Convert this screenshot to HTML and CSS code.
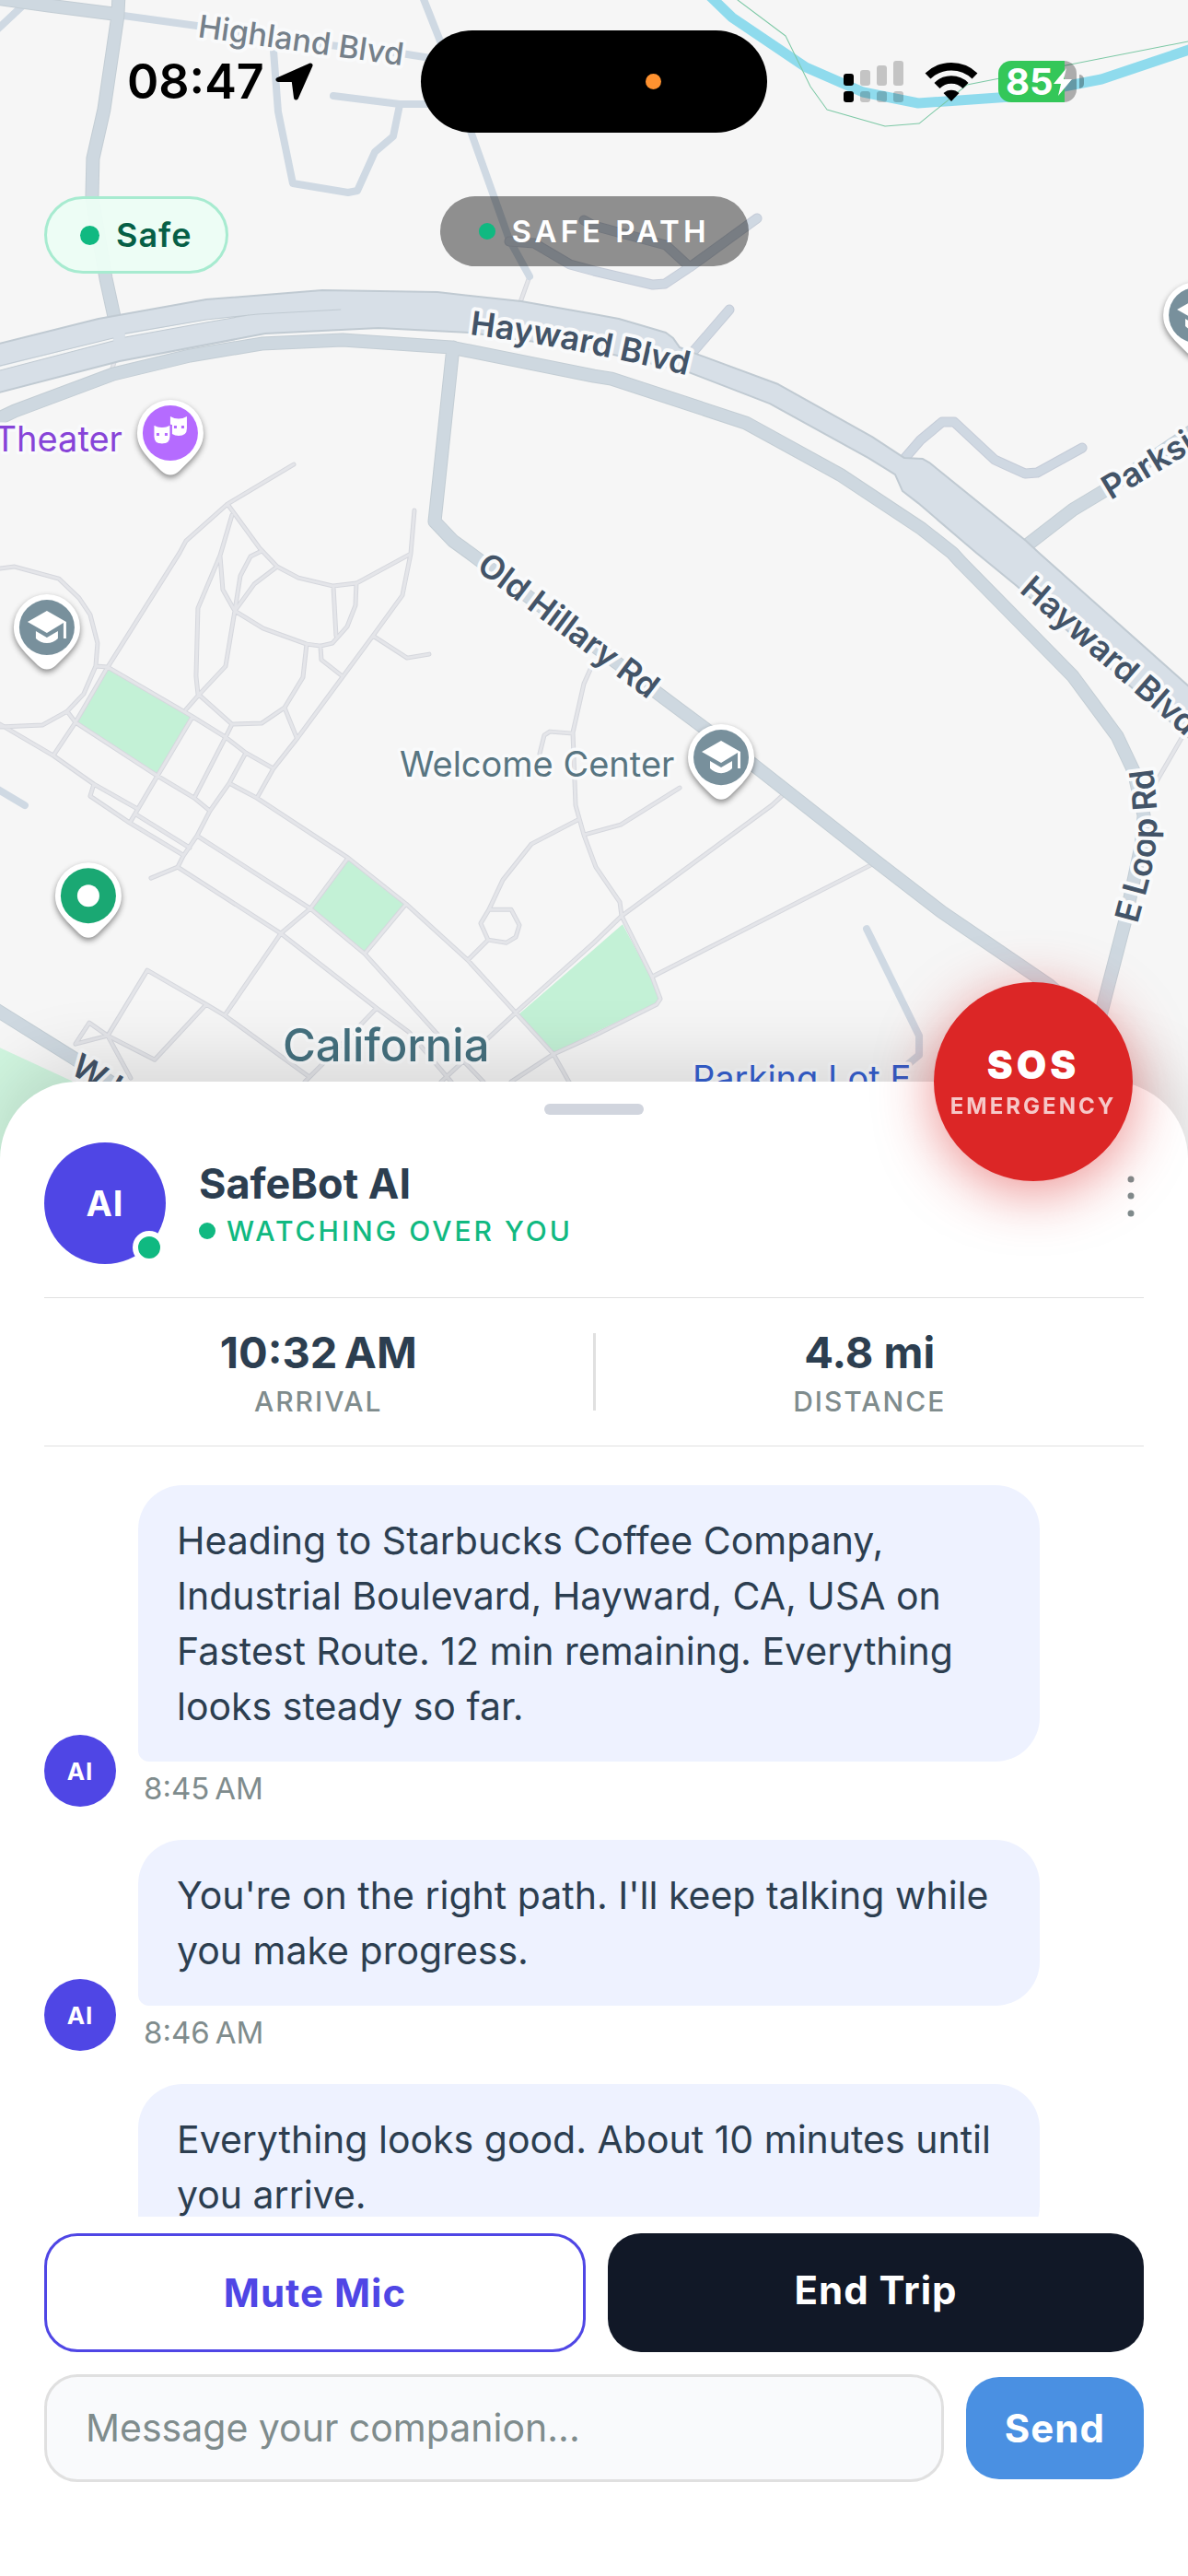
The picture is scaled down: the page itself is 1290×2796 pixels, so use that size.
FILE: index.html
```html
<!DOCTYPE html>
<html lang="en">
<head>
    <meta charset="UTF-8">
    <meta name="viewport" content="width=device-width, initial-scale=1.0">
    <title>Safe Path</title>
    <link rel="stylesheet" href="styles.css">
</head>
<body>
    <div class="screen">
        <section class="map">
            <svg class="map-canvas" viewBox="0 0 1290 1258" preserveAspectRatio="xMidYMin slice" role="img" aria-label="Map">
                <defs>
                    <path id="pin" d="M0-36A36 36 0 0 1 36 0C36 13 29 21 23 28L10 41Q0 50-10 41L-23 28C-29 21-36 13-36 0A36 36 0 0 1 0-36Z"/>
                    <g id="schoolPin">
                        <use href="#pin" class="pin-shape"/>
                        <circle r="30" fill="#78909c"/>
                        <path fill="#fff" d="M0-18 21-6V12H18V-5L0 6-21-6Z"/>
                        <path fill="#fff" d="M-12 4 0 11 12 4V12Q7 17 0 17T-12 12Z"/>
                    </g>
                    <path id="haywardLine" d="M510 363Q640 379 780 416"/>
                    <path id="loopLine" d="M1235 1003C1248 950 1268 915 1247 810"/>
                    <path id="walkways" d="M319 504 247 547 202 587 195 600 117 724M247 547 282 595 301 615 324 627 362 636 387 633 446 601 450 554M252 559 239 603 242 640 255 663 245 723 216 754 202 770M239 603 215 660 213 734 215 753 252 786 284 785 309 768 329 735 333 699M255 663 286 682 333 699 348 701 361 698 377 680 386 657 387 633M362 636 365 690M255 663 261 625 272 604 284 598M255 663 276 634 301 615M446 601 437 646 405 690 323 801 297 834 279 866M405 690 442 714 466 710M348 701 349 716 372 734M309 768 322 800M0 617 16 615 64 628 86 649 98 667 106 698 104 723 91 753 73 772 46 787 0 789M104 723 117 724 208 777 245 800 267 817 297 834M117 724 82 784 58 820M73 772 82 784 171 842 211 866 228 880M209 778 171 842 141 893M252 786 245 800 211 866M267 817 249 850 228 880 214 907 199 929 193 941 164 953M249 850 279 866 378 931 441 981 508 1042 560 1099 601 1144 619 1176M0 786 58 820 102 851 148 877M148 884 206 920M102 851 98 864 141 893 199 928M214 907 337 986 396 1035 473 1120 525 1174M193 941 305 1013 409 1094 444 1120 490 1174M378 931 337 986 305 1013 244 1102M441 981 396 1035M335 1168 244 1102 224 1090 160 1053 117 1124 168 1150 224 1090M331 1174 350 1155 409 1094M117 1124 82 1133 97 1110 117 1124 142 1170M479 1174 560 1099 645 1023 675 994 838 874 850 863M555 1174 601 1144 645 1124 713 1090 717 1084 708 1060 675 994 673 979 647 941 634 906 625 874 622 795 634 742 643 722M627 890 577 916 546 955 531 987 522 1002 530 1020 550 1023 560 1017 564 1004 555 987H531M530 1020 508 1042M622 796 597 794 591 798 586 818M634 906 674 895 738 855M708 1060 949 937M575 300 565 328M1283 801 1254 851M131 370 122 400"/>
                    <path id="lanes" d="M634 239 645 245 723 266 749 290M553 262 580 264 619 287 645 294 709 309 722 308 749 290 822 237M754 380 792 336M980 500 999 478 1023 458H1036L1080 499 1113 514 1126 513 1175 486"/>
                    <path id="roads" d="M-5-2 53 6 123 15M129-5 128 17 113 119 101 172 100 214 115 302 125 348 131 370M-5 456 16 446 123 406 206 386 284 373 372 369 490 377 645 408 664 411 810 459 912 515 1001 574 1034 600 1044 611 1165 734 1213 799 1231 837 1242 885 1239 918 1221 1002 1196 1098 1180 1160M492 377 472 566 492 587 510 600 707 747 818 830 949 933 1023 990 1139 1069 1180 1105M1112 594 1165 553 1200 532 1300 464M-10 1092 78 1147 160 1200"/>
                </defs>

                <!-- parks -->
                <g class="park">
                    <path d="M117 726 209 778 172 840 82 784Z"/>
                    <path d="M379 933 441 981 396 1034 339 986Z"/>
                    <path d="M563 1101 645 1030 676 1003 707 1061 716 1084 713 1088 645 1121 601 1143Z"/>
                    <path class="park-light" d="M0 1137 78 1173 160 1258H0Z"/>
                </g>

                <!-- walkways: darker edge first, then the fill on top -->
                <use href="#walkways" class="line walk-edge"/>
                <use href="#walkways" class="line walk-fill"/>

                <!-- water and creek trail -->
                <path class="line river" d="M765-10 795 19 875 73 937 100 997 112 1098 105 1196 86 1300 51"/>
                <path class="line trail" d="M801 0 853 39 880 94 898 119 961 137 998 134 1050 92 1290 45"/>

                <!-- side streets -->
                <g class="line street">
                    <path d="M-5 34 27 4M134 17 214 28 358 49 436 58 480 65M297 54 302 121 318 199 378 209 388 207 407 165 427 148 434 114M362 104 434 113H480M458-6 477 42 512 145 553 260 575 300"/>
                    <path d="M-10 852 27 874M-4 566V590M941 1008 998 1124V1145L986 1155"/>
                </g>
                <use href="#lanes" class="line lane-edge"/>
                <use href="#lanes" class="line lane-fill"/>

                <!-- main roads -->
                <use href="#roads" class="line road-edge"/>
                <use href="#roads" class="line road-fill"/>
                <path class="boulevard" d="M-5 374 107 346 224 325 350 315 475 317 566 327 645 341 672 346 723 361 731 367 738 377 756 384 845 417 947 474 982 497 1002 498 1009 502 1114 587 1128 600 1300 753V809L1104 636 1060 600 997 546 980 533 972 515 943 497 836 438 748 404 645 380 510 361 411 356 288 362 130 392-5 427Z"/>
                <path fill="#f5f6f6" d="M0 398 123 367V370L0 402ZM136 363 224 347 265 343 224 350 136 366Z"/>
                <path class="line median" d="M0 397 123 367M0 402 123 370M136 362 224 347 280 341 370 336M136 366 224 350 270 342"/>

                <!-- place and street names -->
                <g class="street-name">
                    <text class="faded" transform="translate(214 40) rotate(8)">Highland Blvd</text>
                    <text><textPath href="#haywardLine">Hayward Blvd</textPath></text>
                    <text transform="translate(1106 642) rotate(41)">Hayward Blvd</text>
                    <text transform="translate(1206 543) rotate(-31)">Parkside Dr</text>
                    <text transform="translate(516 618) rotate(37)">Old Hillary Rd</text>
                    <text><textPath href="#loopLine">E Loop Rd</textPath></text>
                    <text transform="translate(75 1164) rotate(31)">W Loop Rd</text>
                </g>
                <g class="place-name">
                    <text x="133" y="490" text-anchor="end" fill="#8744d8">Theater</text>
                    <text x="434" y="843" fill="#587581">Welcome Center</text>
                    <text x="752" y="1184" fill="#3560d0">Parking Lot E</text>
                    <text class="city" x="307" y="1152" fill="#45717f">California</text>
                </g>

                <!-- pins -->
                <g transform="translate(185 470)">
                    <use href="#pin" class="pin-shape"/>
                    <circle r="30" fill="#b56bff"/>
                    <path fill="#fff" d="M0-18Q9-13 18-18V-5Q18 3 9 3 5 3 2 1V-9H0Z"/>
                    <path fill="#fff" stroke="#b56bff" stroke-width="1" d="M-18-9Q-9-4 0-9V4Q0 12-9 12T-18 4Z"/>
                    <path fill="#b56bff" d="M-15 0h3v3h-3zM-6 0h3v3h-3zM4-8h3v3h-3zM12-8h3v3h-3z"/>
                </g>
                <use href="#schoolPin" x="51" y="681"/>
                <use href="#schoolPin" x="783" y="822"/>
                <use href="#schoolPin" x="1299" y="342"/>
                <g transform="translate(96 972)">
                    <use href="#pin" class="pin-shape"/>
                    <circle r="30" fill="#1aa873"/>
                    <circle r="12" fill="#fff"/>
                </g>
            </svg>

            <header class="status-bar">
                <div class="status-time">
                    <span>08:47</span>
                    <svg width="42" height="42" viewBox="0 0 42 42" aria-hidden="true">
                        <path d="M38 3 3 18.500H20L22.500 38Z" stroke="#000" stroke-width="5" stroke-linejoin="round"/>
                    </svg>
                </div>
                <div class="island"><span class="mic-dot"></span></div>
                <div class="status-icons">
                    <svg width="66" height="46" viewBox="0 0 66 46" aria-label="Signal">
                        <rect x="0" y="14" width="11" height="13" rx="3"/>
                        <rect x="0" y="33" width="11" height="12" rx="3"/>
                        <g fill-opacity=".2">
                            <rect x="18" y="10" width="11" height="17" rx="3"/>
                            <rect x="36" y="5" width="11" height="22" rx="3"/>
                            <rect x="54" y="0" width="11" height="27" rx="3"/>
                            <rect x="18" y="33" width="11" height="12" rx="3"/>
                            <rect x="36" y="33" width="11" height="12" rx="3"/>
                            <rect x="54" y="33" width="11" height="12" rx="3"/>
                        </g>
                    </svg>
                    <svg width="58" height="46" viewBox="0 0 58 46" aria-label="Wi-Fi">
                        <path d="M3.500 16.500A37 37 0 0 1 54.500 16.500M13.500 27A22 22 0 0 1 44.500 27" fill="none" stroke="#000" stroke-width="8.500"/>
                        <path d="M29 44 20.500 35A12.500 12.500 0 0 1 37.500 35Z"/>
                    </svg>
                    <div class="battery">
                        <span class="battery-level">85</span>
                        <svg class="bolt" width="22" height="32" viewBox="0 0 22 32" aria-hidden="true">
                            <path fill="#fff" d="M15 1 1 18H9L6 31 21 13H12Z"/>
                        </svg>
                    </div>
                </div>
            </header>

            <div class="chips">
                <div class="chip-safe"><span class="dot"></span>Safe</div>
                <div class="chip-path"><span class="dot"></span>SAFE PATH</div>
            </div>
        </section>

        <main class="sheet">
            <div class="handle"></div>
            <button type="button" class="sos" id="sosButton">
                <span class="sos-title">SOS</span>
                <span class="sos-label">EMERGENCY</span>
            </button>

            <div class="bot-header">
                <div class="avatar">AI<span class="online"></span></div>
                <div class="bot-info">
                    <h1>SafeBot AI</h1>
                    <p><span class="dot"></span>WATCHING OVER YOU</p>
                </div>
                <button type="button" class="menu" aria-label="More options">
                    <svg width="8" height="60" viewBox="0 0 8 60" fill="#7f8c8d" aria-hidden="true">
                        <circle cx="4" cy="4" r="3.500"/>
                        <circle cx="4" cy="22" r="3.500"/>
                        <circle cx="4" cy="41" r="3.500"/>
                    </svg>
                </button>
            </div>

            <div class="stats">
                <div class="stat">
                    <strong>10:32&#8239;AM</strong>
                    <span>ARRIVAL</span>
                </div>
                <div class="stat-divider"></div>
                <div class="stat">
                    <strong>4.8 mi</strong>
                    <span>DISTANCE</span>
                </div>
            </div>

            <div class="chat" id="chat">
                <div class="message">
                    <div class="avatar-small">AI</div>
                    <div class="message-body">
                        <p class="bubble">Heading to Starbucks Coffee Company, Industrial Boulevard, Hayward, CA, USA on Fastest Route. 12 min remaining. Everything looks steady so far.</p>
                        <time>8:45&#8239;AM</time>
                    </div>
                </div>
                <div class="message">
                    <div class="avatar-small">AI</div>
                    <div class="message-body">
                        <p class="bubble">You're on the right path. I'll keep talking while you make progress.</p>
                        <time>8:46&#8239;AM</time>
                    </div>
                </div>
                <div class="message">
                    <div class="avatar-small">AI</div>
                    <div class="message-body">
                        <p class="bubble">Everything looks good. About 10 minutes until you arrive.</p>
                        <time>8:47&#8239;AM</time>
                    </div>
                </div>
            </div>

            <div class="controls">
                <div class="trip-buttons">
                    <button type="button" class="mute">Mute Mic</button>
                    <button type="button" class="end">End Trip</button>
                </div>
                <form class="composer">
                    <input type="text" id="message" name="message" placeholder="Message your companion..." aria-label="Message your companion">
                    <button type="submit" class="send">Send</button>
                </form>
            </div>
        </main>
    </div>
</body>
</html>
```
FILE: styles.css
```css
* {
    box-sizing: border-box;
}

body {
    font-family: Inter, "Liberation Sans", sans-serif;
    margin: 0;
    color: #2c3e50;
    background-color: #fff;
}

h1, p {
    margin: 0;
}

button {
    font-family: inherit;
    border: none;
    cursor: pointer;
}

.screen {
    display: flex;
    flex-direction: column;
    height: 100vh;
}

/* Map */
.map {
    position: relative;
    flex: 0 0 45vh;
    background-color: #f6f6f6;
    overflow: hidden;
}

.map-canvas {
    position: absolute;
    inset: 0;
    width: 100%;
    height: 100%;
}

.park {
    fill: #c3f1d6;
}

.park-light {
    fill: #d0f5df;
}

.line {
    fill: none;
    stroke-linejoin: round;
    stroke-linecap: round;
}

.walk-edge {
    stroke: #d5d7dd;
    stroke-width: 5px;
}

.walk-fill {
    stroke: #e4e5e9;
    stroke-width: 3px;
}

.river {
    stroke: #8fdbed;
    stroke-width: 11px;
}

.trail {
    stroke: #7cc8a5;
    stroke-width: 1px;
}

.street {
    stroke: #cfd9e3;
    stroke-width: 8px;
}

.lane-edge {
    stroke: #c5ccd8;
    stroke-width: 11px;
}

.lane-fill {
    stroke: #cfd8e2;
    stroke-width: 9px;
}

.road-edge {
    stroke: #c3cdd4;
    stroke-width: 15px;
}

.road-fill {
    stroke: #ced8e0;
    stroke-width: 13px;
}

.boulevard {
    fill: #d7dfe7;
    stroke: #c0cad2;
    stroke-width: 2px;
    stroke-linejoin: round;
}

.median {
    stroke: #c0cad2;
    stroke-width: 1px;
}

.street-name text {
    font-size: 36px;
    font-weight: 600;
    fill: #435468;
    stroke: #f9fafb;
    stroke-width: 8px;
    stroke-linejoin: round;
    paint-order: stroke;
}

.street-name .faded {
    font-size: 34px;
    font-weight: 500;
    fill: #75808a;
}

.place-name text {
    font-size: 38px;
    stroke: #f9fafb;
    stroke-width: 7px;
    stroke-linejoin: round;
    paint-order: stroke;
}

.place-name .city {
    font-size: 49px;
    font-weight: 500;
}

.pin-shape {
    fill: #fff;
    filter: drop-shadow(0 3px 3px rgba(0, 0, 0, 0.45));
}

/* Status bar */
.status-bar {
    position: relative;
    display: grid;
    grid-template-columns: 1fr auto 1fr;
    align-items: center;
    padding-top: 33px;
    color: #000;
}

.status-time {
    display: flex;
    align-items: center;
    gap: 12px;
    padding-left: 138px;
    font-size: 52px;
    font-weight: 600;
    line-height: 60px;
}

.island {
    display: flex;
    align-items: center;
    justify-content: flex-end;
    width: 376px;
    height: 111px;
    padding-right: 115px;
    border-radius: 56px;
    background-color: #000;
}

.mic-dot {
    width: 17px;
    height: 17px;
    border-radius: 50%;
    background-color: #ff9230;
}

.status-icons {
    display: flex;
    align-items: center;
    justify-content: flex-end;
    gap: 22px;
    padding-right: 113px;
}

.battery {
    position: relative;
    width: 85px;
    height: 45px;
    margin-right: 8px;
    padding-left: 8px;
    border-radius: 14px;
    background: linear-gradient(to right, #34c759 85%, rgba(0, 0, 0, 0.3) 85%);
}

.battery::after {
    content: "";
    position: absolute;
    top: 15px;
    right: -8px;
    width: 5px;
    height: 15px;
    border-radius: 0 5px 5px 0;
    background-color: rgba(0, 0, 0, 0.3);
}

.battery-level {
    font-size: 40px;
    font-weight: 700;
    line-height: 45px;
    color: #fff;
}

.bolt {
    position: absolute;
    top: 7px;
    right: 4px;
}

/* Chips */
.dot {
    flex: none;
    width: 18px;
    height: 18px;
    border-radius: 50%;
    background-color: #10b981;
}

.chips {
    position: relative;
    display: grid;
    grid-template-columns: 1fr auto 1fr;
    align-items: start;
    padding: 69px 48px 0;
}

.chip-safe {
    display: flex;
    align-items: center;
    justify-self: start;
    gap: 18px;
    padding: 18px 36px;
    border: 3px solid #a7ebd0;
    border-radius: 42px;
    background-color: rgba(236, 253, 245, 0.96);
    color: #065f46;
    font-size: 36px;
    font-weight: 600;
    line-height: 42px;
    letter-spacing: 1px;
}

.chip-safe .dot {
    width: 21px;
    height: 21px;
}

.chip-path {
    display: flex;
    align-items: center;
    gap: 18px;
    padding: 18px 42px;
    border-radius: 38px;
    background-color: rgba(0, 0, 0, 0.42);
    color: #fff;
    font-size: 33px;
    font-weight: 600;
    line-height: 40px;
    letter-spacing: 4px;
}

/* Bottom sheet */
.sheet {
    position: relative;
    display: flex;
    flex-direction: column;
    flex: 1;
    min-height: 0;
    margin-top: -84px;
    padding: 24px 48px 102px;
    border-radius: 84px 84px 0 0;
    background-color: #fff;
    box-shadow: 0 -24px 72px rgba(0, 0, 0, 0.12);
}

.handle {
    flex: none;
    align-self: center;
    width: 108px;
    height: 12px;
    border-radius: 6px;
    background-color: #d1d5de;
}

.sos {
    position: absolute;
    top: -108px;
    right: 60px;
    display: flex;
    flex-direction: column;
    align-items: center;
    justify-content: center;
    gap: 6px;
    width: 216px;
    height: 216px;
    padding: 0;
    border-radius: 50%;
    background-color: #dc2626;
    color: #fff;
    box-shadow: 0 12px 60px rgba(220, 38, 38, 0.5);
}

.sos-title {
    font-size: 42px;
    font-weight: 900;
    line-height: 48px;
    letter-spacing: 4px;
}

.sos-label {
    font-size: 24px;
    font-weight: 700;
    line-height: 30px;
    letter-spacing: 3px;
    opacity: 0.75;
}

.bot-header {
    display: flex;
    align-items: center;
    gap: 36px;
    padding: 30px 0 36px;
    border-bottom: 1px solid #e0e0e0;
}

.avatar {
    position: relative;
    display: flex;
    align-items: center;
    justify-content: center;
    width: 132px;
    height: 132px;
    border-radius: 50%;
    background-color: #4f46e5;
    color: #fff;
    font-size: 38px;
    font-weight: 700;
    letter-spacing: 1px;
}

.online {
    position: absolute;
    right: 0;
    bottom: 0;
    width: 36px;
    height: 36px;
    border: 6px solid #fff;
    border-radius: 50%;
    background-color: #10b981;
}

.bot-info {
    display: flex;
    flex-direction: column;
    flex: 1;
    gap: 6px;
}

.bot-info h1 {
    font-size: 45px;
    font-weight: 700;
    line-height: 54px;
}

.bot-info p {
    display: flex;
    align-items: center;
    gap: 12px;
    color: #10b981;
    font-size: 30px;
    font-weight: 500;
    line-height: 36px;
    letter-spacing: 3px;
}

.menu {
    display: flex;
    padding: 0 10px;
    background: none;
}

.stats {
    display: flex;
    align-items: center;
    padding: 30px 0;
    border-bottom: 1px solid #e0e0e0;
}

.stat {
    display: flex;
    flex-direction: column;
    align-items: center;
    flex: 1;
    gap: 6px;
}

.stat strong {
    font-size: 47px;
    font-weight: 700;
    line-height: 58px;
}

.stat span {
    color: #7f8c8d;
    font-size: 30px;
    font-weight: 500;
    line-height: 36px;
    letter-spacing: 2px;
}

.stat-divider {
    width: 3px;
    height: 84px;
    background-color: #e0e0e0;
}

/* Chat */
.chat {
    display: flex;
    flex-direction: column;
    flex: 1;
    gap: 36px;
    min-height: 0;
    padding-top: 42px;
    overflow: hidden;
}

.message {
    display: flex;
    align-items: flex-end;
    gap: 24px;
}

.avatar-small {
    display: flex;
    align-items: center;
    justify-content: center;
    flex: none;
    width: 78px;
    height: 78px;
    border-radius: 50%;
    background-color: #4f46e5;
    color: #fff;
    font-size: 26px;
    font-weight: 700;
    letter-spacing: 1px;
}

.message-body {
    width: 82%;
}

.bubble {
    padding: 30px 42px;
    border-radius: 48px 48px 48px 12px;
    background-color: #eef2ff;
    font-size: 41px;
    line-height: 60px;
}

.message time {
    display: block;
    margin: 9px 0 0 6px;
    color: #7f8c8d;
    font-size: 33px;
    line-height: 40px;
}

/* Controls */
.controls {
    display: flex;
    flex-direction: column;
    gap: 24px;
    padding-top: 18px;
}

.trip-buttons {
    display: flex;
    gap: 24px;
}

.trip-buttons button {
    display: flex;
    justify-content: center;
    flex: 1 1 0;
    padding: 36px 0;
    border-radius: 36px;
    font-size: 42px;
    font-weight: 700;
    line-height: 51px;
    letter-spacing: 1px;
}

.trip-buttons .mute {
    border: 3px solid #4f46e5;
    background-color: #fff;
    color: #4f46e5;
}

.trip-buttons .end {
    background-color: #111827;
    color: #fff;
}

.composer {
    display: flex;
    align-items: center;
    gap: 24px;
}

.composer input {
    flex: 1;
    min-width: 0;
    padding: 30px 42px;
    border: 3px solid #e0e0e0;
    border-radius: 36px;
    background-color: #f9fafc;
    color: #2c3e50;
    font-family: inherit;
    font-size: 41px;
    line-height: 51px;
}

.composer input::placeholder {
    color: #7f8c8d;
    opacity: 1;
}

.send {
    padding: 30px 42px;
    border-radius: 36px;
    background-color: #4a90e2;
    color: #fff;
    font-size: 42px;
    font-weight: 700;
    line-height: 51px;
    letter-spacing: 1px;
}
```
